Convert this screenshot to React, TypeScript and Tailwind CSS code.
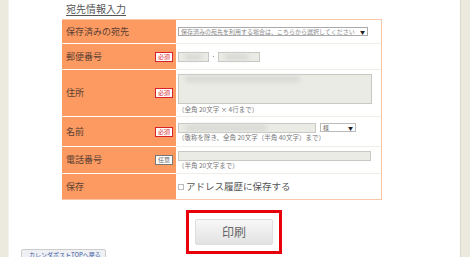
import React from "react";

const jp = { fontFamily: '"Noto Sans CJK JP", "Noto Sans", sans-serif' };

function Badge({ kind }: { kind: "req" | "opt" }) {
  return kind === "req" ? (
    <span className="flex h-[10px] w-[18px] items-center justify-center border border-[#d8232a] bg-white text-[6px] leading-none text-[#d8232a]">
      必須
    </span>
  ) : (
    <span className="flex h-[10px] w-[18px] items-center justify-center border border-[#777] bg-white text-[6px] leading-none text-[#666]">
      任意
    </span>
  );
}

function Row({
  label,
  badge,
  h,
  last,
  children,
}: {
  label: string;
  badge?: "req" | "opt";
  h: string;
  last?: boolean;
  children: React.ReactNode;
}) {
  return (
    <div className={`flex ${h}`}>
      <div
        className={`flex w-[114px] shrink-0 items-center justify-between bg-[#fd9a62] pl-[4px] pr-[3px] text-[9px] text-[#5a4032] ${
          last ? "" : "border-b border-white"
        }`}
      >
        <span>{label}</span>
        {badge && <Badge kind={badge} />}
      </div>
      <div
        className={`flex flex-1 flex-col justify-center pl-[2px] pr-[8px] ${
          last ? "" : "border-b border-[#f0ece6]"
        }`}
      >
        {children}
      </div>
    </div>
  );
}

function Blur({ className }: { className: string }) {
  return (
    <div className={`border border-[#c9c9c4] bg-[#ebebe6] ${className}`}>
      <div className="ml-[6px] mt-[1px] h-[6px] w-[60%] rounded-full bg-[#d8d8d4] blur-[2px]" />
    </div>
  );
}

export default function App() {
  return (
    <div className="flex h-[257px] w-[470px] overflow-hidden bg-white" style={jp}>
      <div className="w-[9px] shrink-0 border-r border-[#f4f2ec] bg-[#ece9df]" />
      <main className="relative flex-1 bg-white">
        <div className="pl-[53px] pt-[2px]">
          <h2 className="ml-[4px] w-fit text-[10px] leading-[14px] text-[#555] underline underline-offset-2">
            宛先情報入力
          </h2>
          <div className="mt-[3px] w-[320px] border border-l-0 border-[#fbc6a8]">
            <Row label="保存済みの宛先" h="h-[24px]">
              <div className="flex h-[9px] w-[190px] items-center justify-between border border-[#aaa] bg-white pl-[2px] pr-[2px] text-[6px] leading-none text-[#888]">
                <span>保存済みの宛先を利用する場合は、こちらから選択してください</span>
                <span className="text-[5px] text-[#222]">▼</span>
              </div>
            </Row>
            <Row label="郵便番号" badge="req" h="h-[26px]">
              <div className="flex items-center gap-[4px]">
                <Blur className="h-[10px] w-[31px]" />
                <span className="h-[1px] w-[1px] bg-[#999]" />
                <Blur className="h-[10px] w-[42px]" />
              </div>
            </Row>
            <Row label="住所" badge="req" h="h-[47px]">
              <Blur className="h-[30px] w-[194px]" />
              <span className="mt-[2px] text-[6.5px] leading-[7px] text-[#777]">（全角 20文字 × 4行まで）</span>
            </Row>
            <Row label="名前" badge="req" h="h-[30px]">
              <div className="flex items-center gap-[4px]">
                <Blur className="h-[10px] w-[138px]" />
                <div className="flex h-[9px] w-[36px] items-center justify-between border border-[#bbb] bg-white px-[2px] text-[6px] leading-none text-[#555]">
                  <span>様</span>
                  <span className="text-[5px] text-[#222]">▼</span>
                </div>
              </div>
              <span className="mt-[1px] text-[6.5px] leading-[7px] text-[#777]">
                （敬称を除き、全角 20文字（半角 40文字）まで）
              </span>
            </Row>
            <Row label="電話番号" badge="opt" h="h-[27px]">
              <div className="h-[10px] w-[193px] border border-[#c9c9c4] bg-[#ebebe6]" />
              <span className="mt-[1px] text-[6.5px] leading-[7px] text-[#777]">（半角 20文字まで）</span>
            </Row>
            <Row label="保存" h="h-[25px]" last>
              <div className="flex items-center gap-[2px] text-[9.5px] text-[#555]">
                <span className="h-[6px] w-[6px] border border-[#bbb] bg-white" />
                <span>アドレス履歴に保存する</span>
              </div>
            </Row>
          </div>
        </div>
        <div className="ml-[177px] mt-[10px] w-[96px] border-[3px] border-[#e8000b] p-[6px]">
          <button className="flex h-[26px] w-full items-center justify-center rounded-[2px] border border-[#ddd] bg-gradient-to-b from-[#f8f8f8] to-[#e2e2e2] text-[12px] text-[#666]">
            印刷
          </button>
        </div>
        <div className="absolute left-[12px] top-[249px] h-[12px] w-[85px] rounded-[2px] border border-[#ccc] bg-[#eef0f4] pl-[7px] text-[6px] leading-[9px] text-[#3a5aa0]">
          カレンダポストTOPへ戻る
        </div>
      </main>
      <div className="w-[10px] shrink-0 border-l border-[#dcd8cc] bg-[#ece9df]" />
    </div>
  );
}
